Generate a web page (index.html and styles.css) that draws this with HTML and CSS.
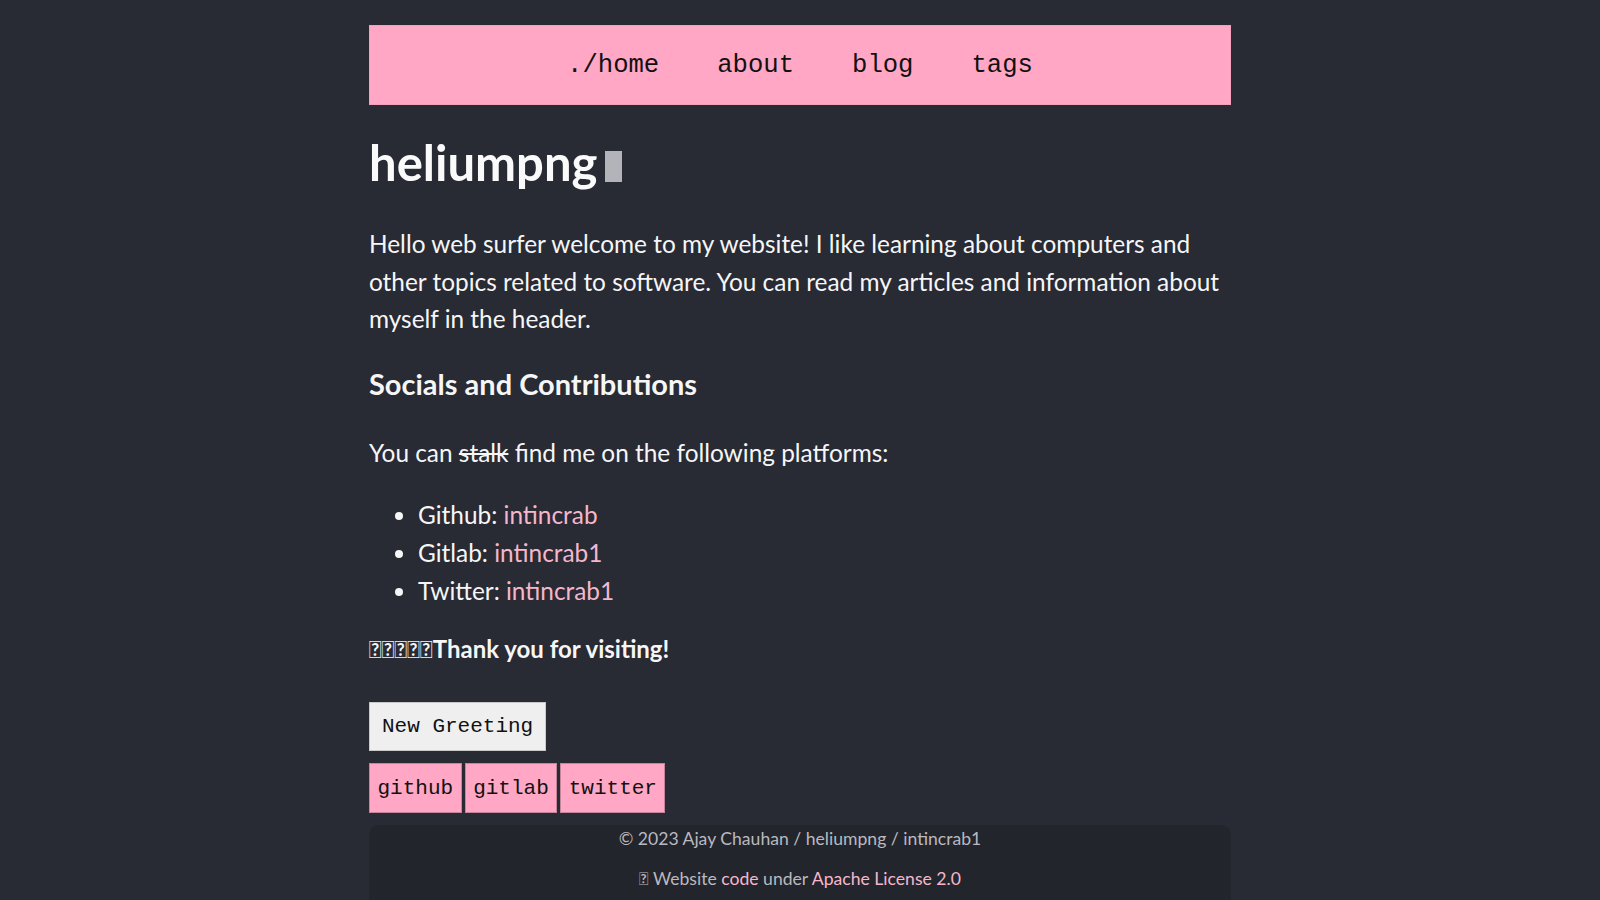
FILE: index.html
```html
<!DOCTYPE html>
<html lang="en">
<head>
<meta charset="utf-8">
<title>heliumpng</title>
<link rel="stylesheet" href="styles.css">
</head>
<body>
<div class="page">
  <nav class="topnav">
    <a href="#" class="navlink">./home</a>
    <a href="#" class="navlink">about</a>
    <a href="#" class="navlink">blog</a>
    <a href="#" class="navlink">tags</a>
  </nav>
  <main class="content">
    <h1 class="title">heliumpng<span class="cursor"></span></h1>
    <p class="intro">Hello web surfer welcome to my website! I like learning about computers and other topics related to software. You can read my articles and information about myself in the header.</p>
    <h2 class="section-title">Socials and Contributions</h2>
    <p class="lead">You can <del>stalk</del> find me on the following platforms:</p>
    <ul class="socials-list">
      <li>Github: <a href="#" class="link">intincrab</a></li>
      <li>Gitlab: <a href="#" class="link">intincrab1</a></li>
      <li>Twitter: <a href="#" class="link">intincrab1</a></li>
    </ul>
    <p class="greeting"><span class="tofu">&#xE000;&#xE001;&#xE002;&#xE003;&#xE004;</span>Thank you for visiting!</p>
    <div class="btn-row">
      <button class="btn btn-plain">New Greeting</button>
    </div>
    <div class="btn-row socials">
      <a href="#" class="btn btn-pink">github</a>
      <a href="#" class="btn btn-pink">gitlab</a>
      <a href="#" class="btn btn-pink">twitter</a>
    </div>
  </main>
  <footer class="footer">
    <p class="foot-line">© 2023 Ajay Chauhan / heliumpng / intincrab1</p>
    <p class="foot-line"><span class="tofu">&#xE005;</span> Website <a href="#" class="foot-link">code</a> under <a href="#" class="foot-link">Apache License 2.0</a></p>
  </footer>
</div>
</body>
</html>
```

FILE: styles.css
```css
html, body {
  margin: 0;
  padding: 0;
  background: #282a34;
  color: #f6f6f7;
  font-family: Lato, "Noto Sans", sans-serif;
}

.page {
  width: 862px;
  margin: 0 auto;
}

.topnav {
  margin-top: 25px;
  height: 80px;
  box-sizing: border-box;
  background: #ffa7c4;
  border: 1px solid #f2a0bb;
  display: flex;
  align-items: center;
  justify-content: center;
  gap: 58px;
}

.navlink {
  font-family: "Liberation Mono", monospace;
  font-size: 25.6px;
  color: #111;
  text-decoration: none;
}

.content {
  display: flex;
  flex-direction: column;
  align-items: flex-start;
}

.title {
  margin: 28px 0 0;
  font-size: 49px;
  font-weight: 700;
  line-height: 1.2;
  color: #fafafa;
}

.cursor {
  display: inline-block;
  width: 17px;
  height: 31px;
  margin-left: 8px;
  background: #b2b4b9;
  vertical-align: -1px;
}

.intro {
  margin: 33px 0 0;
  font-size: 24.4px;
  line-height: 37.75px;
}

.section-title {
  margin: 29px 0 0;
  font-size: 29px;
  font-weight: 700;
  line-height: 1.2;
}

.lead {
  margin: 32.6px 0 0;
  font-size: 24.4px;
  line-height: 37.75px;
}

.lead del {
  text-decoration-thickness: 2px;
}

.socials-list {
  margin: 24px 0 0;
  padding-left: 49px;
  font-size: 24.4px;
  line-height: 37.75px;
}

.link {
  color: #f5b7cb;
  text-decoration: none;
}

.greeting {
  margin: 23px 0 0;
  font-size: 24px;
  font-weight: 700;
  line-height: 33px;
}

.tofu {
  font-family: Lato, sans-serif;
  font-weight: 400;
}

.btn-row {
  display: flex;
  gap: 3px;
  margin-top: 37px;
}

.btn-row.socials {
  margin-top: 12px;
}

.btn {
  font-family: "Liberation Mono", monospace;
  font-size: 21px;
  color: #111;
  text-decoration: none;
  box-sizing: border-box;
  display: flex;
  align-items: center;
  justify-content: center;
}

.btn-plain {
  height: 49px;
  padding: 0 12px;
  background: #efeff0;
  border: 1px solid #c9c9cc;
}

.btn-pink {
  height: 50px;
  padding: 0 7.5px;
  background: #ffa7c4;
  border: 1px solid #c4849a;
}

.footer {
  margin-top: 12px;
  background: #23252d;
  border-radius: 10px 10px 0 0;
  padding: 0 0 10px;
  text-align: center;
  color: #b9b9bf;
  font-size: 17.6px;
}

.foot-line {
  margin: 0 0 13px;
  line-height: 27px;
}

.foot-link {
  color: #f5b7cb;
  text-decoration: none;
}
```
